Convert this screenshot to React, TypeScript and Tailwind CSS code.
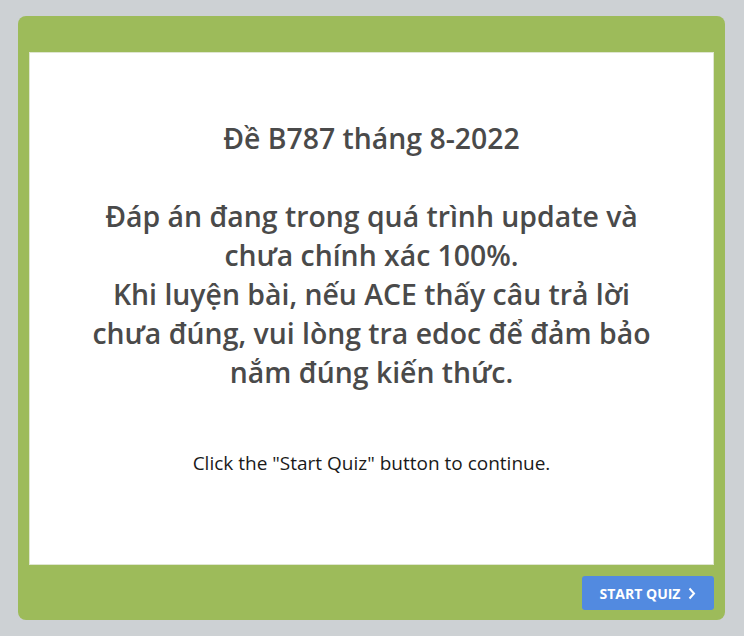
export default function App() {
  return (
    <div className="w-[744px] h-[636px] bg-[#cdd1d4] pt-[16px] pl-[18px] font-['Open_Sans',sans-serif]">
      <div className="w-[707px] h-[604px] bg-[#9dbb5a] rounded-[8px] flex flex-col pt-[36px] px-[11px]">
        <div className="h-[513px] bg-white border border-[#dfe6d0] flex flex-col items-center pt-[66px]">
          <div className="text-[28.4px] leading-[39px] font-semibold text-[#4a4a4a] text-center w-[580px]">
            <p>Đề B787 tháng 8-2022</p>
            <p>&nbsp;</p>
            <p>Đáp án đang trong quá trình update và chưa chính xác 100%.</p>
            <p>Khi luyện bài, nếu ACE thấy câu trả lời chưa đúng, vui lòng tra edoc để đảm bảo nắm đúng kiến thức.</p>
          </div>
          <p className="mt-[59px] text-[19px] leading-[24px] text-[#1a1a1a]">Click the "Start Quiz" button to continue.</p>
        </div>
        <div className="flex justify-end mt-[11px]">
          <button className="w-[132px] h-[34px] bg-[#528ae0] rounded-[3px] flex items-center justify-center gap-[8px] pt-[1px] text-white text-[14px] font-bold">
            START QUIZ
            <svg width="8" height="13" viewBox="0 0 8 13" fill="none">
              <path d="M1.5 1.5 6 6.5l-4.5 5" stroke="white" strokeWidth="2" />
            </svg>
          </button>
        </div>
      </div>
    </div>
  )
}
